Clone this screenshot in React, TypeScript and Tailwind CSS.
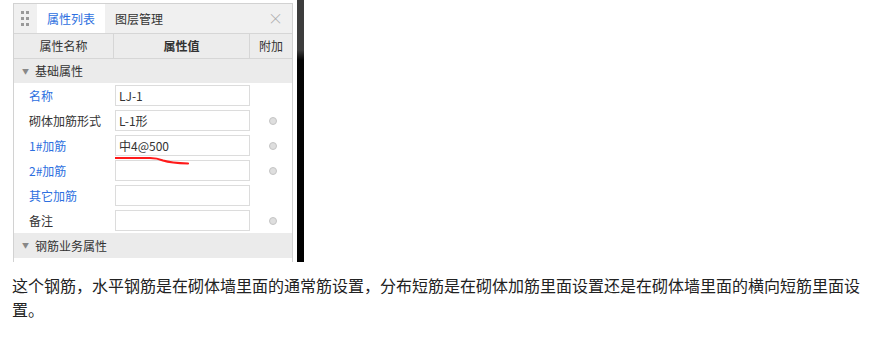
import React from 'react';

const font = { fontFamily: '"Noto Sans CJK SC", "Noto Sans", sans-serif' };

type Row = { label: string; value: string; blue: boolean; dot: boolean };

const rows: Row[] = [
  { label: '名称', value: 'LJ-1', blue: true, dot: false },
  { label: '砌体加筋形式', value: 'L-1形', blue: false, dot: true },
  { label: '1#加筋', value: '中4@500', blue: true, dot: true },
  { label: '2#加筋', value: '', blue: true, dot: true },
  { label: '其它加筋', value: '', blue: true, dot: false },
  { label: '备注', value: '', blue: false, dot: true },
];

const Section: React.FC<{ title: string; h: string }> = ({ title, h }) => (
  <div className={`flex shrink-0 items-center bg-[#ebebeb] ${h}`}>
    <span className="ml-[8px] mr-[6px] text-[7px] text-[#888]">▼</span>
    <span className="text-[12px] text-[#333]">{title}</span>
  </div>
);

const PropRow: React.FC<{ row: Row; mark?: boolean }> = ({ row, mark }) => (
  <div className="flex h-[25px] shrink-0 items-center">
    <div className={`w-[101px] pl-[15px] text-[12px] ${row.blue ? 'text-[#2d6fe0]' : 'text-[#333]'}`}>
      {row.label}
    </div>
    <div className="relative w-[135px]">
      <div className="flex h-[21px] items-center border border-[#dcdcdc] bg-white pl-[3px] text-[12px] text-[#333]">
        {row.value}
      </div>
      {mark && (
        <svg className="absolute left-0 top-[21px] z-10" width="80" height="10" viewBox="0 0 80 10">
          <path d="M0 2 L35 2 Q42 2 48 4.5 Q56 7 73 7.5" stroke="#ff1a1a" strokeWidth="2.2" fill="none" strokeLinecap="round" />
        </svg>
      )}
    </div>
    <div className="flex flex-1 justify-center pl-[3px]">
      {row.dot && <span className="h-[8px] w-[8px] rounded-full border border-[#c4c4c4] bg-[#dedede]" />}
    </div>
  </div>
);

const Panel: React.FC = () => (
  <div className="mt-[3px] flex h-[259px] w-[280px] flex-col overflow-hidden border-x border-t border-[#d2d2d2] bg-white" style={font}>
    {/* tabs */}
    <div className="flex h-[30px] shrink-0 items-stretch border-b border-[#d6d6d6] bg-[#f0f0f0]">
      <div className="grid w-[23px] grid-cols-2 content-center gap-x-[3px] gap-y-[3px] pl-[7px] pr-[10px]">
        {[0, 1, 2, 3, 4, 5].map((i) => (
          <span key={i} className="h-[3px] w-[3px] bg-[#999]" />
        ))}
      </div>
      <div className="flex w-[68px] items-center justify-center bg-white text-[12px] text-[#2d6fe0]">属性列表</div>
      <div className="flex items-center pl-[10px] text-[12px] text-[#333]">图层管理</div>
      <div className="ml-auto flex items-center pr-[9px] text-[15px] font-light text-[#aaa]">×</div>
    </div>
    {/* header */}
    <div className="flex h-[25px] shrink-0 border-b border-[#d6d6d6] bg-[#ececec] text-[12px] text-[#333]">
      <div className="flex w-[100px] items-center justify-center border-r border-[#d6d6d6]">属性名称</div>
      <div className="flex w-[136px] items-center justify-center border-r border-[#d6d6d6] font-bold">属性值</div>
      <div className="flex flex-1 items-center justify-center">附加</div>
    </div>
    <Section title="基础属性" h="h-[24px]" />
    {rows.map((r, i) => (
      <PropRow key={r.label} row={r} mark={i === 2} />
    ))}
    <Section title="钢筋业务属性" h="h-[25px]" />
    <div className="flex shrink-0 pt-[4px]">
      <div className="w-[101px]" />
      <div className="h-[21px] w-[135px] border border-[#dcdcdc]" />
    </div>
  </div>
);

export default function App() {
  return (
    <div className="min-h-[347px] w-[869px] bg-white">
      <div className="flex h-[262px] items-start">
        <div className="w-[13px]" />
        <Panel />
        <div className="w-[4px]" />
        <div className="h-[262px] w-[7px] bg-[linear-gradient(#3d3d3d_0px,#3d3d3d_50px,#050505_60px,#000_262px)]" />
      </div>
      <p
        className="mt-[11px] pl-[12px] pr-[2px] text-[16px] leading-[24px] text-[#222]"
        style={font}
      >
        这个钢筋，水平钢筋是在砌体墙里面的通常筋设置，分布短筋是在砌体加筋里面设置还是在砌体墙里面的横向短筋里面设置。
      </p>
    </div>
  );
}
